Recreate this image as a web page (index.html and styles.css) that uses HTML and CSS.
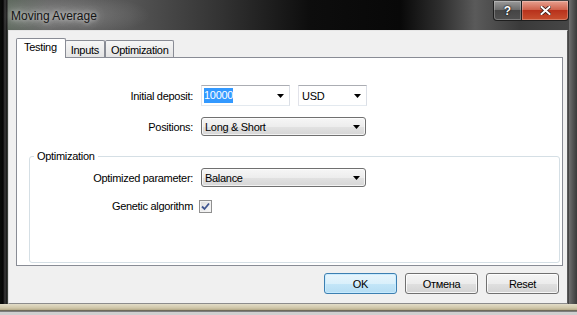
FILE: index.html
```html
<!DOCTYPE html>
<html>
<head>
<meta charset="utf-8">
<title>Moving Average</title>
<link rel="stylesheet" href="styles.css">
</head>
<body>
<div class="window">
  <div class="titlebar">
    <span class="title">Moving Average</span>
    <div class="caption">
      <div class="cap cap-help">?</div>
      <div class="cap cap-close">
        <svg width="11" height="9" viewBox="0 0 11 9"><path d="M1.5 1 L9.5 8 M9.5 1 L1.5 8" stroke="#3a1a14" stroke-width="3.6" stroke-linecap="square"/><path d="M1.5 1 L9.5 8 M9.5 1 L1.5 8" stroke="#ffffff" stroke-width="2" stroke-linecap="square"/></svg>
      </div>
    </div>
  </div>
  <div class="client">
    <div class="tabs">
      <div class="tab tab-active">Testing</div>
      <div class="tab">Inputs</div>
      <div class="tab">Optimization</div>
    </div>
    <div class="panel">
      <div class="form form-top">
        <span class="label">Initial deposit:</span>
        <div class="pair">
          <div class="combo combo-edit combo-deposit">
            <span class="value"><span class="selected">10000</span></span>
            <svg class="arrow" width="7" height="4" viewBox="0 0 7 4"><path d="M0 0H7L3.5 4Z" fill="#000"/></svg>
          </div>
          <div class="combo combo-edit combo-currency">
            <span class="value">USD</span>
            <svg class="arrow" width="7" height="4" viewBox="0 0 7 4"><path d="M0 0H7L3.5 4Z" fill="#000"/></svg>
          </div>
        </div>
        <span class="label">Positions:</span>
        <div class="combo combo-list">
          <span class="value">Long &amp; Short</span>
          <svg class="arrow" width="7" height="4" viewBox="0 0 7 4"><path d="M0 0H7L3.5 4Z" fill="#000"/></svg>
        </div>
      </div>
      <fieldset class="group">
        <legend>Optimization</legend>
        <div class="form form-group">
          <span class="label">Optimized parameter:</span>
          <div class="combo combo-list">
            <span class="value">Balance</span>
            <svg class="arrow" width="7" height="4" viewBox="0 0 7 4"><path d="M0 0H7L3.5 4Z" fill="#000"/></svg>
          </div>
          <span class="label">Genetic algorithm</span>
          <span class="checkbox">
            <svg width="11" height="11" viewBox="0 0 11 11"><path d="M2 5.5 L4.5 8 L9 2.5" fill="none" stroke="#3f5590" stroke-width="1.8"/></svg>
          </span>
        </div>
      </fieldset>
    </div>
    <div class="buttons">
      <button class="btn btn-default">OK</button>
      <button class="btn">Отмена</button>
      <button class="btn">Reset</button>
    </div>
  </div>
</div>
</body>
</html>
```
FILE: styles.css
```css
* { box-sizing: border-box; }

html, body {
  margin: 0;
  padding: 0;
}

body {
  width: 577px;
  height: 315px;
  overflow: hidden;
  background: #1a1a1a;
  font-family: "Liberation Sans", Arial, sans-serif;
  font-size: 11px;
  letter-spacing: -0.3px;
  color: #000;
}

.window {
  width: 577px;
  height: 315px;
  display: flex;
  flex-direction: column;
  padding: 0 9px 11px 8px;
  background:
    linear-gradient(to bottom, rgba(0,0,0,0) 304px, #e2dcc8 304px, #cfc6a8 308px, #b3a988 310px, #2a2a2a 311px, #cfcfcf 312px),
    linear-gradient(to right, #0a0d0a 0, #050505 3px, #3a3a3a 5px, #161616 7px, rgba(0,0,0,0) 8px, rgba(0,0,0,0) 569px, #707070 569px, #5a5a5a 572px, #3a3a3a 577px),
    radial-gradient(ellipse 90px 22px at 60px 15px, rgba(200,200,200,0.35), rgba(200,200,200,0) 100%),
    linear-gradient(to right, #5b685b 0, #5e5e5e 50px, #555 130px, #333 220px, #0d0d0d 310px, #080808 400px, #2e2e2e 440px, #5a5a5a 475px, #3a3a3a 520px, #484848 577px);
}

.titlebar {
  height: 30px;
  display: flex;
  align-items: flex-start;
  flex: none;
}

.title {
  margin-top: 8px;
  margin-left: 3px;
  font-size: 12px;
  line-height: 16px;
  letter-spacing: 0;
  color: #141414;
  text-shadow: 0 0 4px rgba(255,255,255,0.6), 0 0 8px rgba(255,255,255,0.5), 0 0 14px rgba(255,255,255,0.35);
}

.caption {
  margin-left: auto;
  margin-right: -1px;
  margin-top: 1px;
  display: flex;
}

.cap {
  height: 20px;
  border: 1px solid #1e1e1e;
  border-top: none;
  display: flex;
  align-items: center;
  justify-content: center;
  box-shadow: inset 0 0 0 1px rgba(255,255,255,0.25);
}

.cap-help {
  width: 29px;
  border-radius: 0 0 0 4px;
  background: linear-gradient(#9a9a9a 0, #6e6e6e 45%, #454545 50%, #505050 100%);
  color: #fff;
  font-weight: bold;
  font-size: 12px;
  letter-spacing: 0;
  text-shadow: 0 0 2px #000, 0 0 1px #000;
}

.cap-close {
  width: 47px;
  border-left: none;
  border-radius: 0 0 4px 0;
  background: linear-gradient(#e7a08f 0, #d0644e 45%, #b8321c 50%, #c8502f 100%);
}

.client {
  flex: 1;
  display: flex;
  flex-direction: column;
  background: #f0f0f0;
  border: 1px solid;
  border-color: #e6e6e6 #5a5a5a #8c8c8c #dcdcdc;
  padding: 7px 4px 9px 7px;
}

.tabs {
  height: 19px;
  display: flex;
  align-items: flex-end;
  flex: none;
}

.tab {
  height: 17px;
  padding: 3px 5px 0 5px;
  line-height: 13px;
  border: 1px solid #898c95;
  border-bottom: none;
  background: linear-gradient(#f6f6f6, #e4e4e4);
  border-radius: 2px 2px 0 0;
}

.tab-active {
  position: relative;
  z-index: 1;
  height: 20px;
  margin-bottom: -1px;
  padding: 1px 8px 0 7px;
  line-height: 15px;
  background: #fff;
}

.tab-active + .tab {
  margin-left: -1px;
}

.panel {
  flex: 1;
  display: flex;
  flex-direction: column;
  background: #fff;
  border: 1px solid #898c95;
  padding-top: 27px;
}

.form {
  display: grid;
  column-gap: 8px;
  align-items: center;
  justify-content: start;
}

.form-top {
  grid-template-columns: 176px auto;
  row-gap: 11px;
}

.form-group {
  grid-template-columns: 163px auto;
  row-gap: 12px;
}

.label {
  justify-self: end;
  text-align: right;
  line-height: 14px;
}

.pair {
  display: flex;
  gap: 8px;
}

.combo {
  display: flex;
  align-items: center;
  justify-content: space-between;
  padding-right: 5px;
  white-space: nowrap;
}

.combo-edit {
  height: 21px;
  padding-left: 2px;
  background: #fff;
  border: 1px solid;
  border-color: #abadb3 #dbdfe6 #e3e9ef #e2e3ea;
}

.combo-deposit { width: 89px; }

.combo-currency {
  width: 69px;
  padding-left: 3px;
}

.selected {
  display: inline-block;
  background: #3399ff;
  color: #fff;
  line-height: 15px;
}

.combo-list {
  width: 165px;
  height: 19px;
  padding-left: 3px;
  border: 1px solid #707070;
  border-radius: 3px;
  background: linear-gradient(#f6f6f6 0, #ededed 50%, #e2e2e2 51%, #d6d6d6 100%);
  box-shadow: inset 0 0 0 1px rgba(255,255,255,0.7);
}

.arrow { flex: none; }

.group {
  flex: 1;
  margin: 14px 2px 2px 12px;
  padding: 5px 0 0 0;
  min-width: 0;
  border: 1px solid #d5dfe5;
  border-radius: 3px;
}

.group legend {
  margin-left: 4px;
  padding: 0 3px;
  line-height: 13px;
}

.checkbox {
  width: 13px;
  height: 13px;
  margin-left: -2px;
  border: 1px solid #8f8f8f;
  background: linear-gradient(135deg, #dadada, #fbfbfb);
  box-shadow: inset 0 0 0 1px #f2f2f2;
  display: flex;
  align-items: center;
  justify-content: center;
}

.buttons {
  display: flex;
  justify-content: flex-end;
  gap: 8px;
  margin-top: 7px;
  margin-right: 4px;
  flex: none;
}

.btn {
  width: 73px;
  height: 21px;
  padding: 0;
  font: inherit;
  letter-spacing: -0.3px;
  color: #000;
  border: 1px solid #707070;
  border-radius: 3px;
  background: linear-gradient(#f5f5f5 0, #ececec 50%, #e0e0e0 51%, #d3d3d3 100%);
  box-shadow: inset 0 0 0 1px rgba(255,255,255,0.8);
}

.btn-default {
  border-color: #3c7fb1;
  background: linear-gradient(#e8f5fc 0, #daf0fb 50%, #c4e6f8 51%, #b5ddf3 100%);
  box-shadow: inset 0 0 0 1px rgba(200,235,255,0.9);
}
```
